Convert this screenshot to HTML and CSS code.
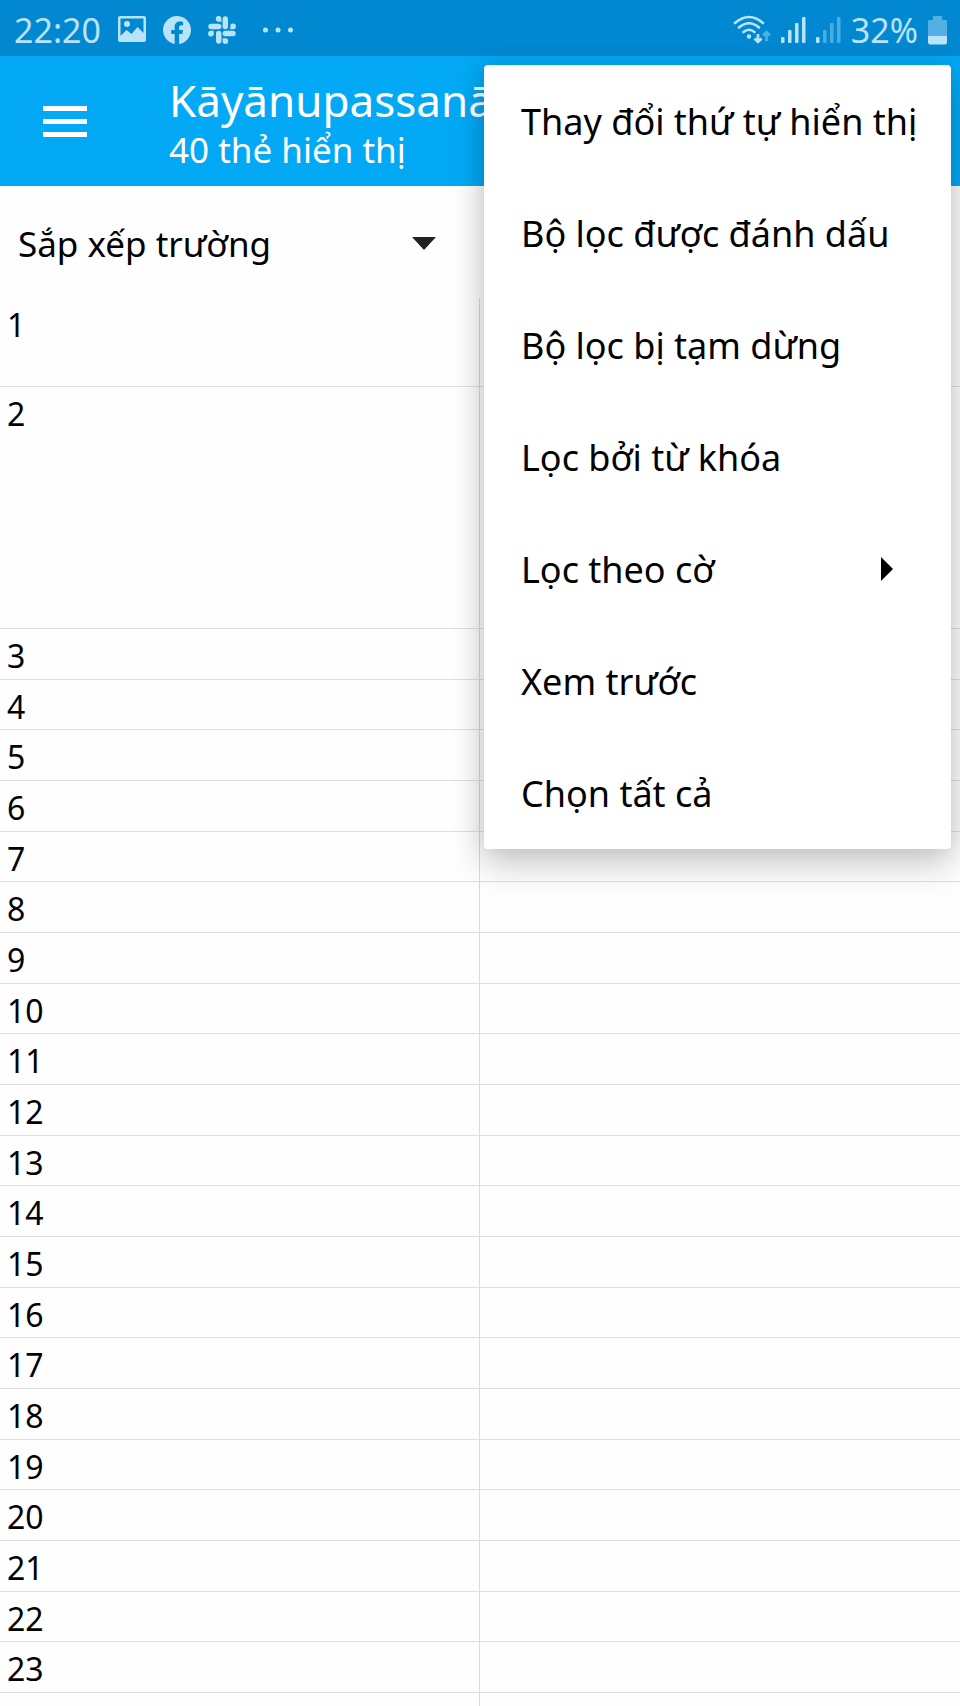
FILE: index.html
```html
<!DOCTYPE html>
<html lang="vi">
<head>
<meta charset="utf-8">
<meta name="viewport" content="width=device-width, initial-scale=1">
<title>Kāyānupassanā</title>
<link rel="stylesheet" href="styles.css">
</head>
<body>
<div class="app">
  <div class="status">
    <div class="status-left">
      <span class="clock">22:20</span>
      <svg class="ic" width="28" height="28" viewBox="0 0 28 28"><path fill-rule="evenodd" fill="currentColor" d="M2 0h24a2 2 0 0 1 2 2v22a2 2 0 0 1-2 2H2a2 2 0 0 1-2-2V2A2 2 0 0 1 2 0zM2.500 2.500V20l6-6 5 4 6-7 6 6V2.500z"/><circle cx="9" cy="8" r="3" fill="currentColor"/></svg>
      <svg class="ic" width="28" height="28" viewBox="0 0 24 24"><path fill="currentColor" d="M24 12a12 12 0 1 0-14 11.900V15.500H7V12h3V9.400c0-3 1.800-4.700 4.500-4.700 1.300 0 2.700.3 2.700.3v2.900h-1.500c-1.500 0-1.900.9-1.900 1.900V12h3.300l-.5 3.500h-2.800v8.400A12 12 0 0 0 24 12z"/></svg>
      <svg class="ic" width="28" height="28" viewBox="0 0 28 28"><g stroke="currentColor" stroke-width="5.400" stroke-linecap="round"><path d="M10.700 17.500v7.500M17.300 3v7.500M3 10.500h7.700M17.300 17.500H25"/></g><g fill="currentColor"><path d="M13.400 5.700h-2.700A2.800 2.800 0 1 1 13.400 3zM22.300 13.200v-2.700a2.800 2.800 0 1 1 2.700 2.700zM14.600 22.300h2.700a2.800 2.800 0 1 1-2.700 2.700zM5.700 14.800v2.700A2.800 2.800 0 1 1 3 14.800z"/></g></svg>
      <svg class="ic dots" width="30" height="28" viewBox="0 0 30 28" fill="currentColor"><circle cx="2.500" cy="14" r="2.500"/><circle cx="15" cy="14" r="2.500"/><circle cx="27.500" cy="14" r="2.500"/></svg>
    </div>
    <div class="status-right">
      <svg class="ic" width="38" height="30" viewBox="0 0 38 30" fill="none" stroke="currentColor" stroke-width="2.600" stroke-linecap="round"><path d="M2 8Q16-4 30 8M6 12.500Q16 4 26 12.500M10.500 17Q16 12.500 21.500 17"/><circle cx="16" cy="21.500" r="2.200" fill="currentColor" stroke="none"/><path stroke-linecap="butt" d="M25 19v8M21.500 23.500l3.500 3.500 3.500-3.500"/><path stroke-linecap="butt" opacity=".45" d="M33.500 26v-8M30 20.500l3.500-3.500 3.500 3.500"/></svg>
      <svg class="ic" width="25" height="28" viewBox="0 0 25 28" fill="currentColor"><rect y="21" width="3.500" height="6" rx="1"/><rect x="7" y="14" width="3.500" height="13" rx="1"/><rect x="14" y="7" width="3.500" height="20" rx="1"/><rect x="21" y="1" width="3.500" height="26" rx="1"/></svg>
      <svg class="ic" width="25" height="28" viewBox="0 0 25 28" fill="currentColor"><rect y="21" width="3.500" height="6" rx="1"/><g opacity=".4"><rect x="7" y="14" width="3.500" height="13" rx="1"/><rect x="14" y="7" width="3.500" height="20" rx="1"/><rect x="21" y="1" width="3.500" height="26" rx="1"/></g></svg>
      <span class="clock">32%</span>
      <svg class="ic" width="19" height="29" viewBox="0 0 19 29" fill="currentColor"><path opacity=".45" d="M5 0h9v4h4l1 1v15H0V5l1-1h4z"/><path d="M0 20h19v7l-1.500 1.500h-16L0 27z"/></svg>
    </div>
  </div>

  <header class="bar">
    <button class="menu-btn" aria-label="Menu"><svg width="44" height="31" viewBox="0 0 44 31" fill="currentColor"><path d="M0 0h44v5H0zM0 13h44v5H0zM0 26h44v5H0z"/></svg></button>
    <div class="titles">
      <h1 class="title">Kāyānupassanā</h1>
      <p class="subtitle">40 thẻ hiển thị</p>
    </div>
  </header>

  <main>
    <div class="filters">
      <div class="spinner">
        <select class="sort" aria-label="Sắp xếp trường"><option>Sắp xếp trường</option></select>
        <svg class="caret" width="24" height="13" viewBox="0 0 24 13"><path fill="#212121" d="M0 0h24L12 13z"/></svg>
      </div>
    </div>
    <table class="cards">
      <tbody>
        <tr class="tall"><td>1</td><td></td></tr>
        <tr class="taller"><td>2</td><td></td></tr>
        <tr><td>3</td><td></td></tr>
        <tr><td>4</td><td></td></tr>
        <tr><td>5</td><td></td></tr>
        <tr><td>6</td><td></td></tr>
        <tr><td>7</td><td></td></tr>
        <tr><td>8</td><td></td></tr>
        <tr><td>9</td><td></td></tr>
        <tr><td>10</td><td></td></tr>
        <tr><td>11</td><td></td></tr>
        <tr><td>12</td><td></td></tr>
        <tr><td>13</td><td></td></tr>
        <tr><td>14</td><td></td></tr>
        <tr><td>15</td><td></td></tr>
        <tr><td>16</td><td></td></tr>
        <tr><td>17</td><td></td></tr>
        <tr><td>18</td><td></td></tr>
        <tr><td>19</td><td></td></tr>
        <tr><td>20</td><td></td></tr>
        <tr><td>21</td><td></td></tr>
        <tr><td>22</td><td></td></tr>
        <tr><td>23</td><td></td></tr>
        <tr><td></td><td></td></tr>
      </tbody>
    </table>
  </main>

  <div class="popup" role="menu">
    <button class="item" role="menuitem">Thay đổi thứ tự hiển thị</button>
    <button class="item" role="menuitem">Bộ lọc được đánh dấu</button>
    <button class="item" role="menuitem">Bộ lọc bị tạm dừng</button>
    <button class="item" role="menuitem">Lọc bởi từ khóa</button>
    <button class="item" role="menuitem">Lọc theo cờ
      <svg width="12" height="24" viewBox="0 0 12 24"><path d="M0 0l12 12L0 24z"/></svg></button>
    <button class="item" role="menuitem">Xem trước</button>
    <button class="item" role="menuitem">Chọn tất cả</button>
  </div>
</div>
</body>
</html>
```

FILE: styles.css
```css
* {
  box-sizing: border-box;
}

body {
  margin: 0;
  background: #fefefe;
  color: #000;
  font-family: "Noto Sans", sans-serif;
}

button,
select {
  font: inherit;
  color: inherit;
  background: none;
  border: 0;
  padding: 0;
  margin: 0;
}

.app {
  position: relative;
  height: 100vh;
  overflow: hidden;
}

.status {
  display: flex;
  justify-content: space-between;
  height: 56px;
  padding: 4px 13px 0 14px;
  background: #0288d1;
  color: #b9e3f8;
}

.status-left,
.status-right {
  display: flex;
  align-items: center;
}

.status-left {
  gap: 17px;
}

.status-right {
  gap: 10px;
}

.ic {
  display: block;
  flex: none;
}

.dots {
  margin-left: 10px;
}

.clock {
  font-size: 34px;
  line-height: 48px;
}

.bar {
  display: flex;
  align-items: center;
  gap: 82px;
  height: 130px;
  padding-left: 43px;
  background: #03a9f4;
  color: #fff;
}

.menu-btn svg {
  display: block;
}

.titles {
  padding-top: 6px;
}

.title,
.subtitle {
  margin: 0;
  font-weight: 400;
  white-space: nowrap;
}

.title {
  font-size: 44px;
  line-height: 52px;
}

.subtitle {
  font-size: 35px;
  line-height: 48px;
}

.filters {
  display: grid;
  grid-template-columns: 1fr 1fr;
  height: 112px;
}

.spinner {
  display: grid;
  align-items: center;
  padding: 2px 44px 0 18px;
}

.sort,
.caret {
  grid-area: 1 / 1;
}

.sort {
  appearance: none;
  width: 100%;
  height: 80px;
  font-size: 35px;
}

.caret {
  justify-self: end;
  pointer-events: none;
}

.cards {
  width: 100%;
  table-layout: fixed;
  border-collapse: separate;
  border-spacing: 0;
}

.cards td {
  height: 51px;
  padding: 5px 7px 0;
  border-bottom: 1px solid #e0e0e0;
  font-size: 32px;
  line-height: 44px;
  vertical-align: top;
}

.cards tr:nth-child(3n+4) td {
  height: 50px;
}

.cards td:first-child {
  border-right: 1px solid #dadada;
}

.cards .tall td {
  height: 89px;
}

.cards .taller td {
  height: 242px;
}

.popup {
  position: absolute;
  top: 65px;
  right: 9px;
  width: 467px;
  display: flex;
  flex-direction: column;
  background: #fff;
  border-radius: 4px;
  box-shadow: 0 16px 36px rgba(0, 0, 0, 0.2), 0 0 24px rgba(0, 0, 0, 0.1);
}

.item {
  display: flex;
  align-items: center;
  justify-content: space-between;
  height: 112px;
  padding: 0 58px 0 37px;
  font-size: 36px;
  white-space: nowrap;
}
```
